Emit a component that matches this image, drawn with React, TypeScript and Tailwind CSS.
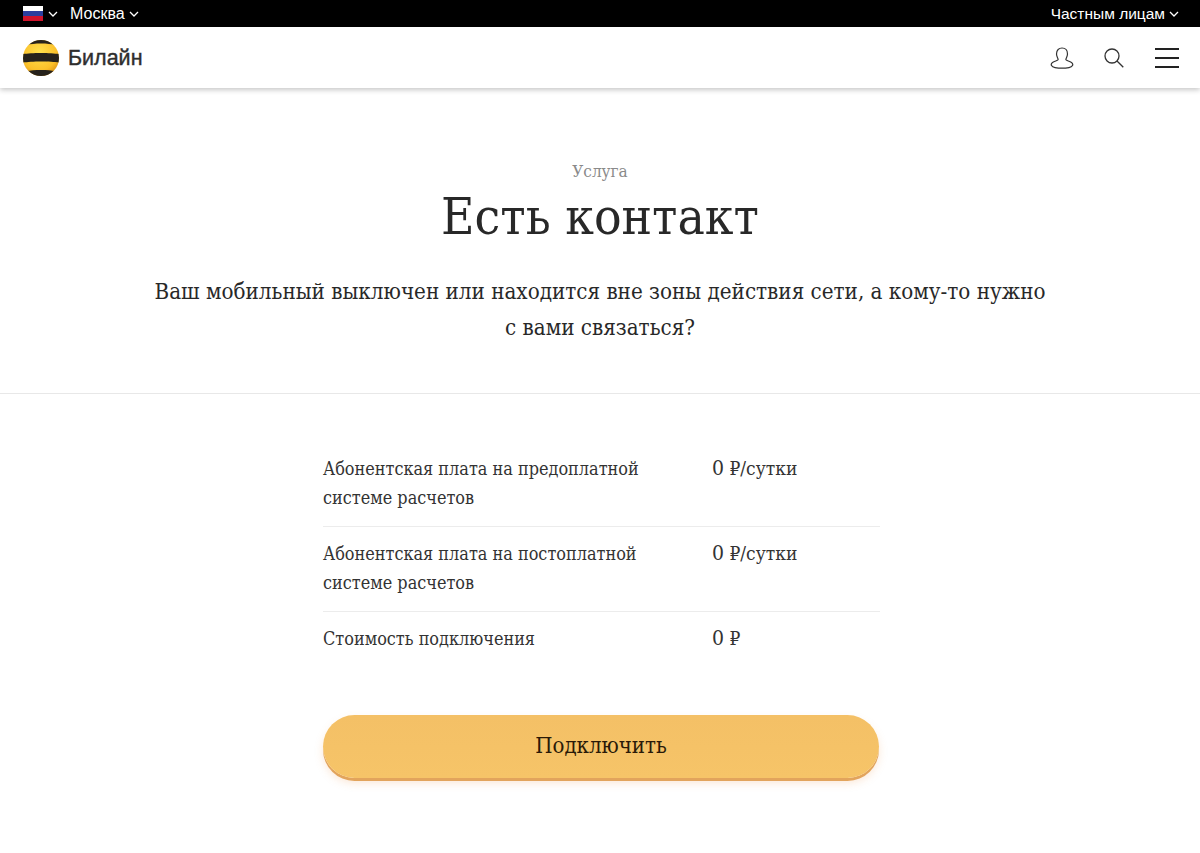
const serif = "font-['DejaVu_Serif_Condensed','DejaVu_Serif',serif]";

const rows = [
  { label: ["Абонентская плата на предоплатной", "системе расчетов"], price: "0", unit: "₽/сутки" },
  { label: ["Абонентская плата на постоплатной", "системе расчетов"], price: "0", unit: "₽/сутки" },
  { label: ["Стоимость подключения"], price: "0", unit: "₽" },
];

function Chevron({ className }: { className?: string }) {
  return (
    <svg viewBox="0 0 10 6" className={className} fill="none" stroke="currentColor" strokeWidth="1.3">
      <path d="M1 1l4 4 4-4" />
    </svg>
  );
}

function Flag() {
  return (
    <div className="flex h-[15px] w-[20px] flex-col">
      <div className="h-[5px] bg-white" />
      <div className="h-[5px] bg-[#2b3f9e]" />
      <div className="h-[5px] bg-[#d0142c]" />
    </div>
  );
}

function Logo() {
  return (
    <svg viewBox="0 0 36 36" className="h-[36px] w-[36px]">
      <defs>
        <radialGradient id="ball" cx="0.45" cy="0.35" r="0.7">
          <stop offset="0" stopColor="#ffe14d" />
          <stop offset="0.7" stopColor="#fbc02a" />
          <stop offset="1" stopColor="#d98f14" />
        </radialGradient>
        <clipPath id="ballClip">
          <circle cx="18" cy="18" r="18" />
        </clipPath>
      </defs>
      <circle cx="18" cy="18" r="18" fill="url(#ball)" />
      <g clipPath="url(#ballClip)" fill="#26221c">
        <path d="M4 0H32V5C26 3 10 3 4 5Z" />
        <path d="M0 14C8 12.500 28 12.500 36 14V22.500C28 21 8 21 0 22.500Z" />
        <path d="M4 31C10 29.500 26 29.500 32 31V36H4Z" />
      </g>
    </svg>
  );
}

function UserIcon() {
  return (
    <svg viewBox="0 0 24 22" className="h-[22px] w-[24px]" fill="none" stroke="#333" strokeWidth="1.200">
      <path d="M6.500 7C6.500 3 9 1 12 1S17.500 3 17.500 7C17.500 9.500 16 11 15.800 12.500C15.700 13.500 19 14 21.500 15.500C24 17.500 22.500 20 19 20.600C15 21.200 9 21.200 5 20.600C1.500 20 0 17.500 2.500 15.500C5 14 8.300 13.500 8.200 12.500C8 11 6.500 9.500 6.500 7Z" />
    </svg>
  );
}

function SearchIcon() {
  return (
    <svg viewBox="0 0 20 20" className="h-[20px] w-[20px]" fill="none" stroke="#333" strokeWidth="1.300">
      <circle cx="8" cy="8" r="7" />
      <path d="M13 13l6.300 6.300" />
    </svg>
  );
}

export default function App() {
  return (
    <div className="h-[853px] overflow-hidden bg-white">
      {/* top strip */}
      <div className="flex h-[27px] items-center justify-between bg-black pl-[23px] pr-[21px] font-['Liberation_Sans',sans-serif] text-[15.500px] text-white">
        <div className="flex items-center">
          <Flag />
          <Chevron className="ml-[5px] h-[6px] w-[10px]" />
          <span className="ml-[12px] text-[16px]">Москва</span>
          <Chevron className="ml-[4px] h-[6px] w-[10px]" />
        </div>
        <div className="flex items-center">
          <span>Частным лицам</span>
          <Chevron className="ml-[4px] h-[6px] w-[10px]" />
        </div>
      </div>

      {/* nav */}
      <header className="flex h-[61px] items-center justify-between bg-white pl-[23px] pr-[21px] shadow-[0_2px_5px_rgba(0,0,0,0.22)]">
        <div className="flex items-center">
          <Logo />
          <span className="ml-[9px] pt-[2px] font-['Liberation_Sans',sans-serif] text-[21.500px] text-[#2e2e2e] [-webkit-text-stroke:0.4px_#2e2e2e]">Билайн</span>
        </div>
        <div className="flex items-center">
          <UserIcon />
          <div className="ml-[30px]"><SearchIcon /></div>
          <div className="ml-[31px] flex w-[24px] flex-col gap-[7px]">
            <div className="h-[2px] bg-[#222]" />
            <div className="h-[2px] bg-[#222]" />
            <div className="h-[2px] bg-[#222]" />
          </div>
        </div>
      </header>

      {/* hero */}
      <section className={`${serif} border-b border-[#e8e8e8] pb-[48px] pt-[71px] text-center`}>
        <p className="text-[17px] leading-[24px] text-[#8a8a8a]">Услуга</p>
        <h1 className="mt-[2px] text-[51px] leading-[64px] text-[#282828]">Есть контакт</h1>
        <p className="mx-auto mt-[24px] w-[1000px] text-[22.200px] leading-[36px] text-[#282828]">
          Ваш мобильный выключен или находится вне зоны действия сети, а кому-то нужно<br />с вами связаться?
        </p>
      </section>

      {/* tariff table */}
      <section className={`${serif} ml-[323px] mt-[48px] w-[557px] text-[#333]`}>
        {rows.map((row, i) => (
          <div key={i} className={`flex pb-[14px] pt-[12px] ${i < rows.length - 1 ? "border-b border-[#ececec]" : ""}`}>
            <div className="w-[389px] text-[17.900px] leading-[29px]">
              {row.label.map((l) => <div key={l}>{l}</div>)}
            </div>
            <div className="text-[19px] leading-[29px]">
              <span className="text-[21px]">{row.price}</span> {row.unit}
            </div>
          </div>
        ))}
        <button className="mt-[48px] flex h-[63px] w-[556px] items-center justify-center rounded-[32px] bg-gradient-to-b from-[#f4c066] to-[#f6c468] pb-[3px] text-[22px] text-[#2a1a08] shadow-[0_3px_0_#e2a45c,0_5px_8px_rgba(240,160,90,0.25)]">
          Подключить
        </button>
      </section>
    </div>
  );
}
